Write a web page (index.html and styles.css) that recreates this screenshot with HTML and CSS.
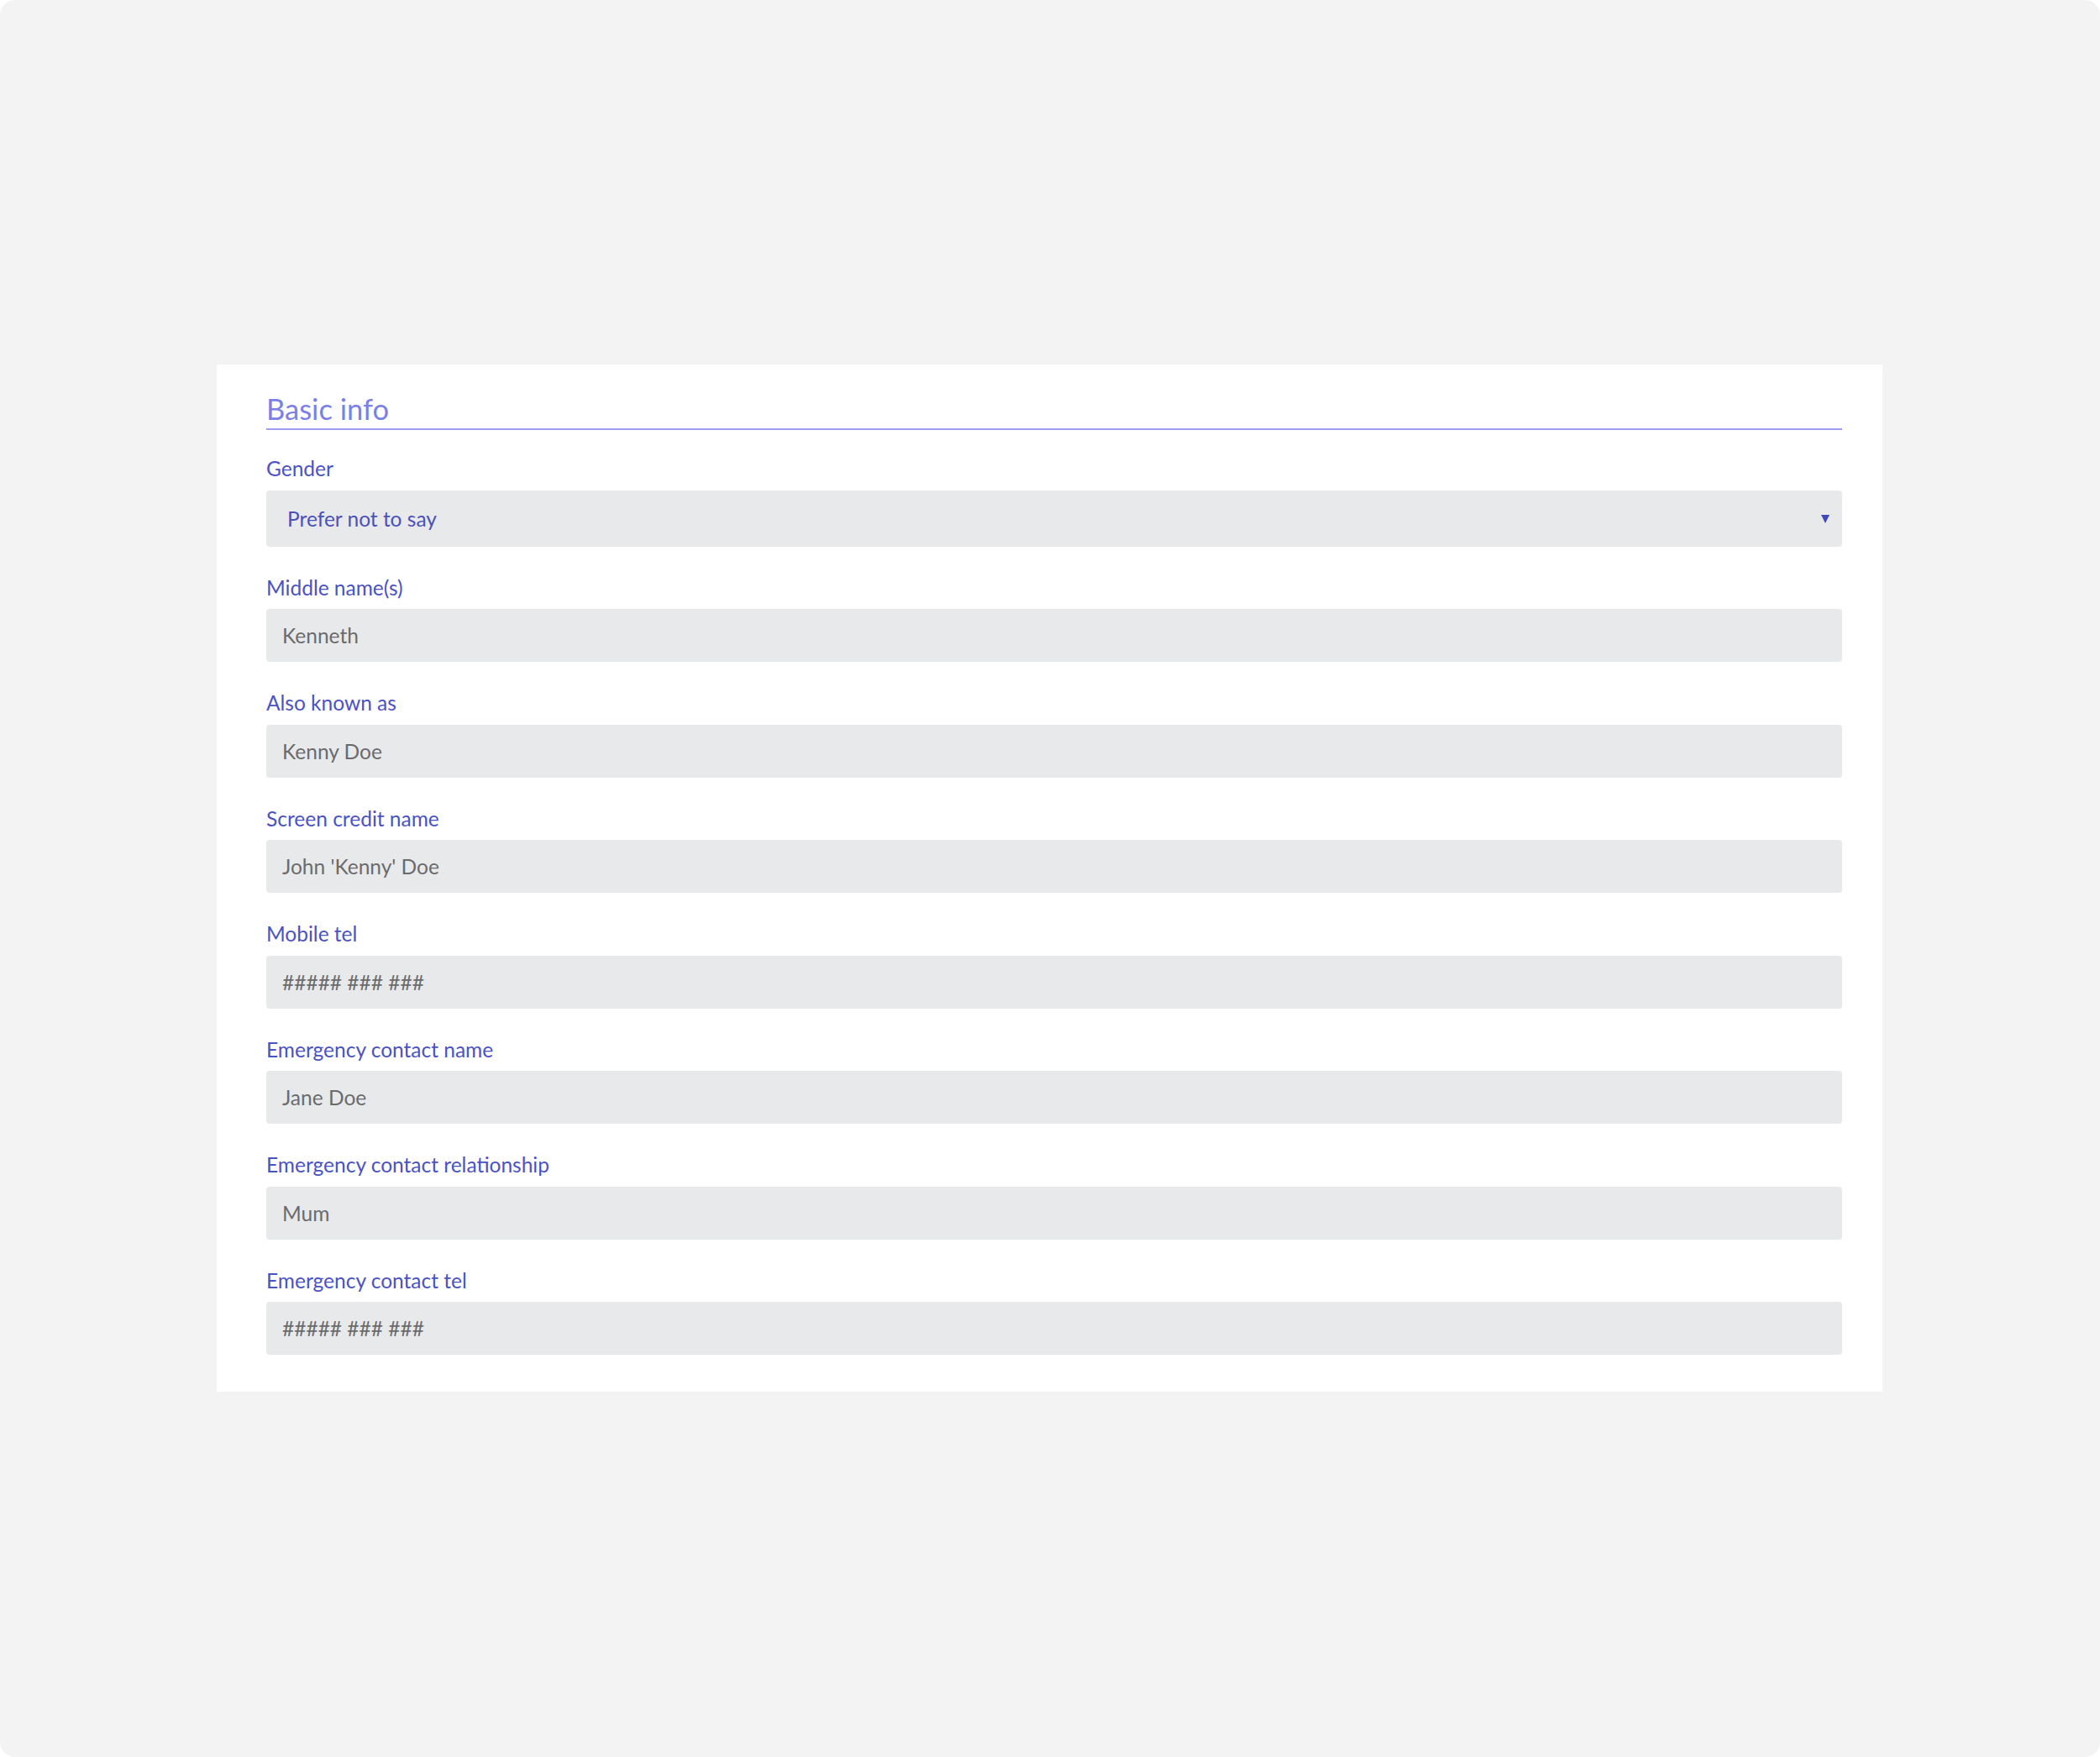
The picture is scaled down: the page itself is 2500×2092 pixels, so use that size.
FILE: index.html
```html
<!DOCTYPE html>
<html lang="en">
<head>
<meta charset="utf-8">
<title>Basic info</title>
<link rel="stylesheet" href="styles.css">
</head>
<body>
<div class="page">
  <form class="card">
    <h2 class="card-title">Basic info</h2>
    <div class="field">
      <label class="field-label">Gender</label>
      <div class="select">
        <span class="select-value">Prefer not to say</span>
        <span class="select-arrow"></span>
      </div>
    </div>
    <div class="field">
      <label class="field-label">Middle name(s)</label>
      <div class="input">Kenneth</div>
    </div>
    <div class="field">
      <label class="field-label">Also known as</label>
      <div class="input">Kenny Doe</div>
    </div>
    <div class="field">
      <label class="field-label">Screen credit name</label>
      <div class="input">John 'Kenny' Doe</div>
    </div>
    <div class="field">
      <label class="field-label">Mobile tel</label>
      <div class="input">##### ### ###</div>
    </div>
    <div class="field">
      <label class="field-label">Emergency contact name</label>
      <div class="input">Jane Doe</div>
    </div>
    <div class="field">
      <label class="field-label">Emergency contact relationship</label>
      <div class="input">Mum</div>
    </div>
    <div class="field">
      <label class="field-label">Emergency contact tel</label>
      <div class="input">##### ### ###</div>
    </div>
  </form>
</div>
</body>
</html>
```

FILE: styles.css
```css
html, body {
  margin: 0;
  padding: 0;
  background: #ffffff;
}
body {
  font-family: Lato, "Open Sans", sans-serif;
}
.page {
  width: 2500px;
  height: 2092px;
  box-sizing: border-box;
  background: #f3f3f3;
  border-radius: 18px;
  padding: 434px 259px 0 258px;
}
.card {
  background: #ffffff;
  box-sizing: border-box;
  padding: 31px 48px 44px 59px;
  display: flex;
  flex-direction: column;
}
.card-title {
  margin: 0;
  font-weight: 400;
  font-size: 34.5px;
  line-height: 44px;
  color: #7b80e6;
  border-bottom: 2px solid #9a9eec;
  padding-bottom: 1px;
}
.field {
  display: flex;
  flex-direction: column;
}
.field-label {
  font-size: 24.5px;
  line-height: 28px;
  color: #4a52c4;
  margin-top: 35px;
  margin-bottom: 11.5px;
}
.card-title + .field .field-label {
  margin-top: 32px;
}
.select {
  height: 67px;
  background: #e8e9eb;
  border-radius: 4px;
  display: flex;
  align-items: center;
  justify-content: space-between;
  padding: 0 15px 0 25px;
}
.select-value {
  font-size: 24.5px;
  color: #4b51b8;
}
.select-arrow {
  width: 0;
  height: 0;
  border-left: 5px solid transparent;
  border-right: 5px solid transparent;
  border-top: 10px solid #3f48b8;
  margin-top: 2px;
}
.input {
  height: 63px;
  background: #e8e9eb;
  border-radius: 4px;
  display: flex;
  align-items: center;
  padding: 0 19px;
  font-size: 24.5px;
  color: #6b6b6b;
}
```
